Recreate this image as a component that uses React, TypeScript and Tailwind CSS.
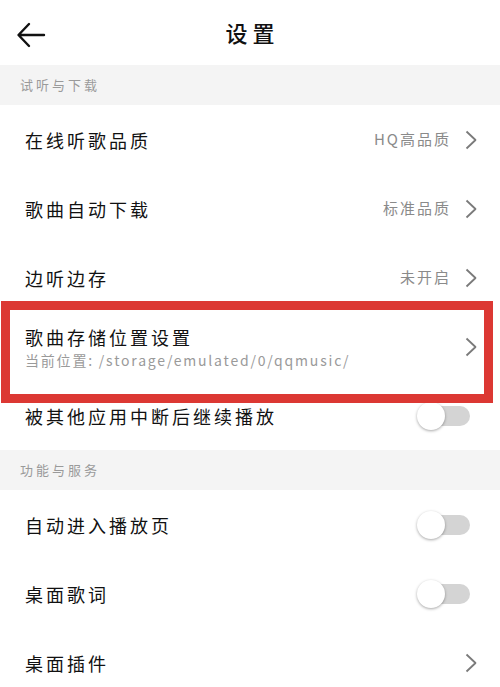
const FONT = { fontFamily: '"Noto Sans CJK SC", "Noto Sans", sans-serif' };

function Chevron() {
  return (
    <svg width="12" height="20" viewBox="0 0 12 20" className="shrink-0">
      <path d="M1.5 1.5 L10.5 10 L1.5 18.5" fill="none" stroke="#7a7a7a" strokeWidth="1.8" strokeLinejoin="round" />
    </svg>
  );
}

function Toggle() {
  return (
    <div className="relative mr-[7px] h-[28px] w-[53px] shrink-0">
      <div className="absolute right-0 top-[4px] h-[20px] w-[44px] rounded-full bg-[#d4d4d4]" />
      <div className="absolute left-0 top-0 size-[28px] rounded-full bg-white shadow-[0_1px_3px_rgba(0,0,0,0.35)]" />
    </div>
  );
}

function SectionHeader({ title }: { title: string }) {
  return (
    <div className="flex h-[40px] items-center bg-[#f4f4f4] pl-[20px] text-[13px] tracking-[3px] text-[#9a9a9a]">
      {title}
    </div>
  );
}

interface RowProps {
  label: string;
  value?: string;
  sub?: string;
  kind: "link" | "toggle";
}

function Row({ label, value, sub, kind }: RowProps) {
  return (
    <div className="flex h-[69px] items-center justify-between pl-[25px] pr-[23px]">
      <div className="flex flex-col">
        <span className="text-[18px] leading-[24px] tracking-[3px] text-[#111]">{label}</span>
        {sub ? <span className="mt-[2px] text-[14px] leading-[18px] tracking-[1.8px] text-[#9a9a9a]">{sub}</span> : null}
      </div>
      {kind === "toggle" ? (
        <Toggle />
      ) : (
        <div className="flex items-center gap-[14px]">
          {value ? <span className="text-[15px] tracking-[2px] text-[#8a8a8a]">{value}</span> : null}
          <Chevron />
        </div>
      )}
    </div>
  );
}

export default function App() {
  return (
    <div className="relative h-[687px] w-[500px] overflow-hidden bg-white" style={FONT}>
      <header className="relative flex h-[65px] items-center justify-center">
        <svg width="30" height="28" viewBox="0 0 30 28" className="absolute left-[16px] top-[21px]">
          <path d="M28 14 H3 M13 3 L2.5 14 L13 25" fill="none" stroke="#111" strokeWidth="2.4" strokeLinecap="round" strokeLinejoin="round" />
        </svg>
        <h1 className="pl-[5px] text-[22px] font-medium tracking-[5px] text-[#111]">设置</h1>
      </header>

      <SectionHeader title="试听与下载" />
      <Row label="在线听歌品质" value="HQ高品质" kind="link" />
      <Row label="歌曲自动下载" value="标准品质" kind="link" />
      <Row label="边听边存" value="未开启" kind="link" />
      <Row label="歌曲存储位置设置" sub="当前位置: /storage/emulated/0/qqmusic/" kind="link" />
      <Row label="被其他应用中断后继续播放" kind="toggle" />

      <SectionHeader title="功能与服务" />
      <Row label="自动进入播放页" kind="toggle" />
      <Row label="桌面歌词" kind="toggle" />
      <Row label="桌面插件" kind="link" />

      {/* annotation box over the storage row */}
      <div className="pointer-events-none absolute left-[1px] top-[301px] h-[102px] w-[492px] border-[9px] border-[#dc3833]" />
    </div>
  );
}
